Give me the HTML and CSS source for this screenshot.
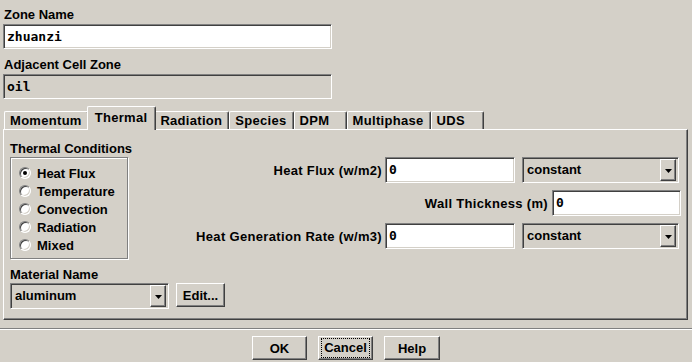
FILE: index.html
```html
<!DOCTYPE html>
<html>
<head>
<meta charset="utf-8">
<link rel="stylesheet" href="styles.css">
</head>
<body>
<div class="dialog">
  <div class="label">Zone Name</div>
  <div class="entry white wide">zhuanzi</div>
  <div class="label gap8">Adjacent Cell Zone</div>
  <div class="entry wide">oil</div>

  <div class="tabs">
    <div class="tab">Momentum</div>
    <div class="tab active">Thermal</div>
    <div class="tab">Radiation</div>
    <div class="tab">Species</div>
    <div class="tab">DPM</div>
    <div class="tab">Multiphase</div>
    <div class="tab">UDS</div>
  </div>

  <div class="panel">
    <div class="left">
      <div class="label">Thermal Conditions</div>
      <div class="group">
        <div class="radio-item"><span class="radio checked"></span>Heat Flux</div>
        <div class="radio-item"><span class="radio"></span>Temperature</div>
        <div class="radio-item"><span class="radio"></span>Convection</div>
        <div class="radio-item"><span class="radio"></span>Radiation</div>
        <div class="radio-item"><span class="radio"></span>Mixed</div>
      </div>
      <div class="label gap8">Material Name</div>
      <div class="mat-row">
        <div class="select mat-select">
          <span class="select-text">aluminum</span>
          <span class="arrow-btn"><svg width="7" height="4" viewBox="0 0 7 4"><polygon points="0,0 7,0 3.5,4" fill="#000"/></svg></span>
        </div>
        <div class="btn edit">Edit...</div>
      </div>
    </div>

    <div class="right">
      <div class="row r1">
        <span class="rlabel">Heat Flux (w/m2)</span>
        <div class="entry white num">0</div>
        <div class="select const">
          <span class="select-text">constant</span>
          <span class="arrow-btn"><svg width="7" height="4" viewBox="0 0 7 4"><polygon points="0,0 7,0 3.5,4" fill="#000"/></svg></span>
        </div>
      </div>
      <div class="row r2">
        <span class="rlabel">Wall Thickness (m)</span>
        <div class="entry white num2">0</div>
      </div>
      <div class="row r1">
        <span class="rlabel">Heat Generation Rate (w/m3)</span>
        <div class="entry white num">0</div>
        <div class="select const">
          <span class="select-text">constant</span>
          <span class="arrow-btn"><svg width="7" height="4" viewBox="0 0 7 4"><polygon points="0,0 7,0 3.5,4" fill="#000"/></svg></span>
        </div>
      </div>
    </div>
  </div>

  <div class="sep"></div>

  <div class="buttons">
    <div class="btn b-ok">OK</div>
    <div class="btn b-cancel"><span class="focus">Cancel</span></div>
    <div class="btn b-help">Help</div>
  </div>
</div>
</body>
</html>
```

FILE: styles.css
```css
* { box-sizing: border-box; }
html, body { margin: 0; padding: 0; }
body {
  background: #d4d0c8;
  width: 692px;
  height: 362px;
  overflow: hidden;
  font-family: "Liberation Sans", Arial, sans-serif;
  font-weight: bold;
  font-size: 13px;
  color: #000;
}
.dialog {
  padding: 7px 4px 0 3px;
  display: flex;
  flex-direction: column;
}
.label {
  line-height: 16px;
  height: 16px;
  padding-left: 1px;
  white-space: nowrap;
}
.gap8 { margin-top: 8px; }

.entry {
  height: 25px;
  margin-top: 1px;
  border: 1px solid;
  border-color: #808080 #fff #fff #808080;
  box-shadow: inset 1px 1px 0 #404040, inset -1px -1px 0 #d4d0c8;
  background: #d4d0c8;
  font-family: "DejaVu Sans Mono", "Liberation Mono", monospace;
  font-weight: bold;
  font-size: 13px;
  line-height: 23px;
  padding-left: 3px;
  white-space: nowrap;
}
.entry.white { background: #fff; }
.wide { width: 329px; }

/* tabs */
.tabs {
  display: flex;
  align-items: flex-end;
  margin-top: 7px;
  margin-left: 1px;
  height: 23px;
}
.tab {
  height: 18px;
  min-width: 53px;
  padding: 0 6px 0 5px;
  letter-spacing: 0.3px;
  border-top: 1px solid #fff;
  border-left: 1px solid #fff;
  border-right: 1px solid #404040;
  border-radius: 2px 2px 0 0;
  box-shadow: inset -1px 0 0 #808080;
  line-height: 17px;
  white-space: nowrap;
  background: #d4d0c8;
}
.tab.active {
  position: relative;
  z-index: 1;
  height: 24px;
  margin: 0 -2px -1px -2px;
  padding: 0 8px 0 7px;
  line-height: 21px;
}

/* panel */
.panel {
  height: 191px;
  display: flex;
  border-top: 1px solid #fff;
  border-left: 1px solid #fff;
  border-right: 1px solid #404040;
  border-bottom: 1px solid #404040;
  box-shadow: inset -1px -1px 0 #808080;
  padding: 11px 6px 0 6px;
}
.left {
  width: 118px;
  flex: none;
  display: flex;
  flex-direction: column;
}
.left .label { padding-left: 0; }
.group {
  width: 118px;
  height: 102px;
  border: 1px solid #808080;
  box-shadow: inset 1px 1px 0 #fff, 1px 1px 0 #fff;
  padding: 6px 0 0 8px;
}
.radio-item {
  height: 18px;
  display: flex;
  align-items: center;
  white-space: nowrap;
}
.radio {
  width: 12px;
  height: 12px;
  margin-right: 6px;
  border-radius: 50%;
  border: 1px solid;
  border-color: #808080 #fff #fff #808080;
  background: #fff;
  box-shadow: inset 1px 1px 0 #404040, inset -1px -1px 0 #d4d0c8;
  display: inline-flex;
  align-items: center;
  justify-content: center;
}
.radio.checked::after {
  content: "";
  width: 4px;
  height: 4px;
  border-radius: 50%;
  background: #000;
}

.mat-row {
  display: flex;
  align-items: flex-start;
  gap: 7px;
  width: 215px;
}
.select {
  height: 26px;
  flex: none;
  display: flex;
  align-items: stretch;
  border: 1px solid;
  border-color: #808080 #fff #fff #808080;
  box-shadow: inset 1px 1px 0 #404040, inset -1px -1px 0 #d4d0c8;
  background: #d4d0c8;
  padding: 1px 2px 1px 1px;
}
.select-text {
  flex: 1;
  padding-left: 3px;
  line-height: 22px;
  white-space: nowrap;
}
.arrow-btn {
  width: 16px;
  border: 1px solid;
  border-color: #fff #404040 #404040 #fff;
  box-shadow: inset -1px -1px 0 #808080;
  display: flex;
  align-items: center;
  justify-content: center;
  padding-top: 1px;
}
.mat-select { width: 159px; }

.btn {
  height: 24px;
  flex: none;
  border: 1px solid;
  border-color: #fff #404040 #404040 #fff;
  box-shadow: inset -1px -1px 0 #808080;
  background: #d4d0c8;
  display: flex;
  align-items: center;
  justify-content: center;
  white-space: nowrap;
}
.edit { width: 49px; }

/* right side */
.right {
  flex: 1;
  padding-top: 16px;
  display: flex;
  flex-direction: column;
  gap: 7px;
}
.row {
  display: flex;
  justify-content: flex-end;
  align-items: center;
  height: 26px;
}
.row .entry { margin-top: 0; height: 26px; line-height: 24px; flex: none; }
.r1 { padding-right: 2px; }
.rlabel { white-space: nowrap; letter-spacing: 0.33px; }
.r1 .rlabel { margin-right: 3px; }
.r2 .rlabel { margin-right: 4px; }
.num { width: 130px; margin-right: 7px; }
.num2 { width: 129px; }
.const { width: 157px; }

/* bottom */
.sep {
  margin: 8px -4px 0 -3px;
  height: 2px;
  border-top: 1px solid #808080;
  border-bottom: 1px solid #fff;
}
.buttons {
  margin-top: 6px;
  display: flex;
  justify-content: center;
  gap: 11px;
  margin-left: -3px;
  margin-right: -4px;
}
.b-ok, .b-cancel { width: 55px; }
.b-help { width: 56px; }
.focus {
  border: 1px dotted #000;
  padding: 0 2px;
  line-height: 18px;
}
```
